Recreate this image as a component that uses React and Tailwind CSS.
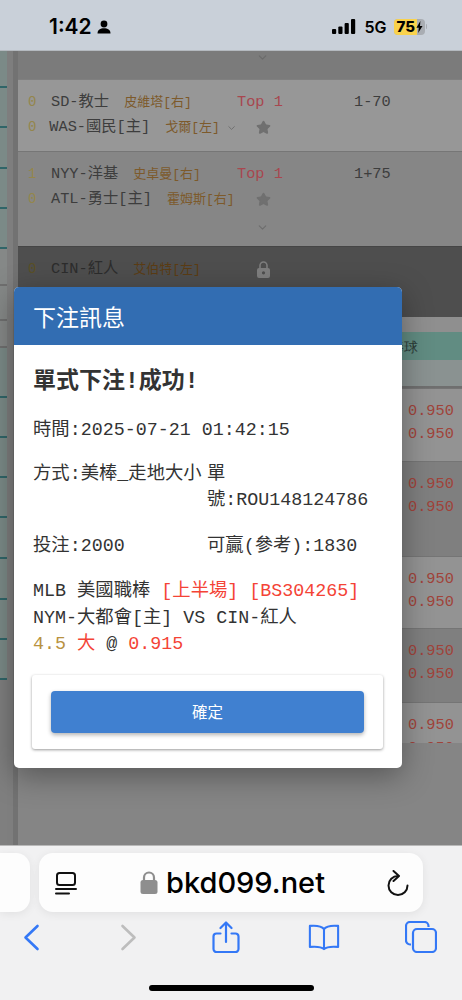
import { ChevronDown, Star } from "lucide-react";

const matches = [
  {
    bg: "bg-[#979797]",
    border: "border-[#7f7f7f]",
    height: "h-[72px]",
    home: { score: "0", team: "SD-教士", pitcher: "皮維塔[右]" },
    away: { score: "0", team: "WAS-國民[主]", pitcher: "戈爾[左]" },
    inlineChevron: true,
    top: "Top 1",
    line: "1-70",
  },
  {
    bg: "bg-[#868686]",
    border: "border-[#767676]",
    height: "h-[95px]",
    home: { score: "1", team: "NYY-洋基", pitcher: "史卓曼[右]" },
    away: { score: "0", team: "ATL-勇士[主]", pitcher: "霍姆斯[右]" },
    chevron: true,
    top: "Top 1",
    line: "1+75",
  },
];

const oddsRows = [
  { y: "h-[73px]", bg: "bg-[#939393]" },
  { y: "h-[95px]", bg: "bg-[#7f7f7f]" },
  { y: "h-[72px]", bg: "bg-[#939393]" },
  { y: "h-[74px]", bg: "bg-[#7f7f7f]" },
  { y: "h-[41px]", bg: "bg-[#939393]" },
];

// teal cells on the far left, the gray ones are the unselected items
const stripCells = [
  "h-[37px] bg-[#7b8a87] border-[#2f6568]",
  "h-[40px] bg-[#7b8a87] border-[#2f6568]",
  "h-[41px] bg-[#7b8a87] border-[#2f6568]",
  "h-[40px] bg-[#7b8a87] border-[#2f6568]",
  "h-[40px] bg-[#7b8a87] border-[#2f6568]",
  "h-[37px] bg-[#858887] border-[#6f6f6f]",
  "h-[35px] bg-[#858887] border-[#6f6f6f]",
  "h-[27px] bg-[#858887] border-[#6f6f6f]",
  "h-[50px] bg-[#7b8a87] border-[#2f6568]",
  "h-[40px] bg-[#7b8a87] border-[#2f6568]",
  "h-[40px] bg-[#7b8a87] border-[#2f6568]",
  "h-[40px] bg-[#7b8a87] border-[#2f6568]",
  "h-[41px] bg-[#7b8a87] border-[#2f6568]",
  "h-[41px] bg-[#7b8a87] border-[#2f6568]",
  "h-[40px] bg-[#7b8a87] border-[#2f6568]",
  "h-[40px] bg-[#7b8a87] border-[#2f6568]",
];

function TeamLine({ score, team, pitcher, dark, children }) {
  return (
    <div className="flex items-center h-[25px] whitespace-nowrap">
      <span className={`w-[33px] pl-[10px] text-[14px] ${dark ? "text-[#5a5026]" : "text-[#94864c]"}`}>{score}</span>
      <span className={`text-[15.3px] ${dark ? "text-[#2c2c2c]" : "text-[#3d3d3d]"}`}>{team}</span>
      <span className={`ml-[15px] text-[13px] ${dark ? "text-[#5b3c14]" : "text-[#7d5a2b]"}`}>{pitcher}</span>
      {children}
    </div>
  );
}

function MatchRow({ match }) {
  return (
    <div className={`${match.height} ${match.bg} border-t ${match.border} pt-[10px] shrink-0`}>
      <div className="grid grid-cols-[219px_117px_1fr]">
        <div>
          <TeamLine {...match.home} />
          <TeamLine {...match.away}>
            {match.inlineChevron && <ChevronDown className="ml-[6px] w-[12px] h-[12px] text-[#6d6d6d]" />}
          </TeamLine>
        </div>
        <div className="w-[48px]">
          <div className="h-[25px] flex items-center text-[15.3px] text-[#a8474f] whitespace-nowrap">{match.top}</div>
          <div className="h-[25px] flex items-center justify-center pl-[4px]">
            <Star className="w-[15px] h-[15px] fill-[#707070] text-[#707070]" />
          </div>
        </div>
        <div className="h-[25px] flex items-center text-[15.3px] text-[#3d3d3d]">{match.line}</div>
      </div>
      {match.chevron && (
        <div className="pl-[238px] mt-[9px]">
          <ChevronDown className="w-[13px] h-[13px] text-[#6d6d6d]" />
        </div>
      )}
    </div>
  );
}

function Background() {
  return (
    <div className="flex h-[794px] overflow-hidden">
      <div className="w-[7px] shrink-0 flex flex-col">
        {stripCells.map((cell, i) => (
          <div key={i} className={`${cell} border-b-2 shrink-0`} />
        ))}
      </div>
      <div className="w-[6px] shrink-0 bg-[#7e7e7e]" />
      <div className="w-[5px] shrink-0 bg-[#727272]" />
      <div className="flex-1 min-w-0 flex flex-col bg-[#868686] [font-family:'Liberation_Mono','Noto_Sans_CJK_TC',monospace]">
        <div className="h-[28px] bg-[#7b7b7b] pl-[238px] shrink-0">
          <ChevronDown className="w-[13px] h-[13px] text-[#6a6a6a]" />
        </div>
        {matches.map((m) => (
          <MatchRow key={m.line} match={m} />
        ))}
        <div className="h-[71px] bg-[#4e4e4e] border-t border-[#454545] pt-[10px] shrink-0">
          <div className="grid grid-cols-[219px_1fr]">
            <TeamLine score="0" team="CIN-紅人" pitcher="艾伯特[左]" dark />
            <div className="w-[48px] h-[25px] flex items-center justify-center pl-[4px]">
              <svg width="13" height="17" viewBox="0 0 13 17" fill="#7e7e7e">
                <path d="M3 8V4.5a3.5 3.5 0 0 1 7 0V8" fill="none" stroke="#7e7e7e" strokeWidth="1.6" />
                <path fillRule="evenodd" d="M2 7h9a2 2 0 0 1 2 2v6a2 2 0 0 1-2 2H2a2 2 0 0 1-2-2V9a2 2 0 0 1 2-2zm4.5 3.2a1.6 1.6 0 1 0 0 3.2 1.6 1.6 0 0 0 0-3.2z" />
              </svg>
            </div>
          </div>
        </div>
        <div className="h-[15px] bg-[#8f8f8f] shrink-0" />
        <div className="h-[28px] bg-[#618c82] shrink-0 flex items-center justify-end pr-[44px] text-[14px] text-[#2c3b38] font-sans">
          棒球
        </div>
        <div className="h-[28px] bg-[#8a9291] border-b-2 border-[#6f6f6f] shrink-0" />
        {oddsRows.map((row, i) => (
          <div key={i} className={`${row.y} ${row.bg} border-t border-[#757575] shrink-0 overflow-hidden pt-[11px] pl-[390px] text-[15.3px] leading-[23px] text-[#a0433a]`}>
            <div>0.950</div>
            <div>0.950</div>
          </div>
        ))}
        <div className="flex-1 bg-[#858585]" />
      </div>
    </div>
  );
}

function BetModal() {
  return (
    <div className="absolute left-[14px] top-[287px] w-[388px] h-[481px] bg-white rounded-[5px] overflow-hidden shadow-[0_8px_30px_rgba(0,0,0,0.35)] [font-family:'Liberation_Mono','Noto_Sans_CJK_TC',monospace] text-[#333333]">
      <div className="h-[58px] bg-[#326db2] flex items-center pl-[19px] text-[23px] text-white [font-family:'Noto_Sans_CJK_TC',sans-serif]">
        下注訊息
      </div>
      <div className="px-[19px]">
        <div className="mt-[20px] text-[23px] leading-[34px] font-semibold text-[#333333]">
          單式下注!成功!
        </div>
        <div className="mt-[19px] text-[18.33px] leading-[26px]">時間:2025-07-21 01:42:15</div>
        <div className="mt-[18px] grid grid-cols-2 text-[18.33px] leading-[26px]">
          <div>方式:美棒_走地大小</div>
          <div className="-ml-[1px]">單號:ROU148124786</div>
        </div>
        <div className="mt-[20px] grid grid-cols-2 text-[18.33px] leading-[26px]">
          <div>投注:2000</div>
          <div className="-ml-[1px]">可贏(參考):1830</div>
        </div>
        <div className="mt-[19px] text-[18.33px] leading-[26.5px]">
          <div>
            MLB 美國職棒 <span className="text-[#f44336]">[上半場] [BS304265]</span>
          </div>
          <div>NYM-大都會[主] VS CIN-紅人</div>
          <div>
            <span className="text-[#b8923f]">4.5</span> <span className="text-[#f44336]">大</span> @ <span className="text-[#f44336]">0.915</span>
          </div>
        </div>
        <div className="mt-[16px] -ml-[1px] h-[74px] rounded-[3px] px-[19px] pt-[16px] shadow-[0_1px_3px_rgba(0,0,0,0.4)]">
          <button className="w-full h-[42px] rounded-[4px] bg-[#4080d0] text-white text-[15.5px] shadow-[0_2px_4px_rgba(0,0,0,0.3)] [font-family:'Noto_Sans_CJK_TC',sans-serif]">
            確定
          </button>
        </div>
      </div>
    </div>
  );
}

function StatusBar() {
  return (
    <div className="h-[51px] bg-[#c9d0d9] border-b border-[#b4b9bf] flex items-center pl-[49px] pr-[35px] pt-[3px] [font-family:Inter,sans-serif] text-black">
      <span className="text-[21px] font-semibold">1:42</span>
      <svg className="ml-[5px]" width="14" height="14" viewBox="0 0 14 14" fill="black">
        <circle cx="7" cy="4" r="3.4" />
        <path d="M0.5 13.5c0-3.6 2.8-5.2 6.5-5.2s6.5 1.6 6.5 5.2z" />
      </svg>
      <div className="ml-auto flex items-center">
        <svg width="24" height="15" viewBox="0 0 24 15" fill="black">
          <rect x="0" y="10" width="4.2" height="5" rx="1" />
          <rect x="6.3" y="7.4" width="4.2" height="7.6" rx="1" />
          <rect x="12.6" y="4" width="4.2" height="11" rx="1" />
          <rect x="19" y="0" width="4.2" height="15" rx="1" />
        </svg>
        <span className="ml-[8px] text-[16px] font-semibold">5G</span>
        <div className="ml-[7px] relative w-[31px] h-[16px] rounded-[4px] bg-[#a9adb3] overflow-hidden">
          <div className="absolute inset-y-0 left-0 w-[23px] bg-[#f9d24c]" />
          <div className="absolute inset-0 flex items-center pl-[3px] text-[15px] leading-none font-extrabold">
            75
            <svg width="7" height="12" viewBox="0 0 7 12" fill="black" className="ml-[1px]">
              <path d="M4.4 0 0.4 6.8h2.4L2.2 12l4.3-7.1H4z" />
            </svg>
          </div>
        </div>
        <div className="ml-[1px] w-[1.5px] h-[5px] rounded-r-sm bg-[#a9adb3]" />
      </div>
    </div>
  );
}

function BrowserBar() {
  return (
    <div className="h-[155px] bg-[#f1f1f2] border-t border-[#b9b9b9] flex flex-col [font-family:Inter,sans-serif]">
      <div className="mt-[7px] flex gap-[9px] h-[59px]">
        <div className="w-[30px] rounded-r-[14px] bg-[#fdfdfd] shadow-[0_2px_10px_rgba(0,0,0,0.07)]" />
        <div className="w-[384px] rounded-[14px] bg-[#fdfdfd] shadow-[0_2px_10px_rgba(0,0,0,0.07)] flex items-center pl-[16px] pr-[14px]">
          <svg width="22" height="24" viewBox="0 0 22 24" fill="none" stroke="#111" strokeWidth="2" strokeLinecap="round">
            <rect x="2" y="2" width="18" height="12" rx="2.5" />
            <path d="M1 18h20M1 22.5h13" />
          </svg>
          <div className="flex-1 flex items-center justify-center pl-[1px]">
            <svg width="18" height="24" viewBox="0 0 18 24" fill="#8e8e8e">
              <path d="M4 10V6.5a5 5 0 0 1 10 0V10" fill="none" stroke="#8e8e8e" strokeWidth="2.2" />
              <rect x="0.5" y="9" width="17" height="14" rx="2.5" />
            </svg>
            <span className="ml-[8px] text-[29px] font-medium text-black leading-none">bkd099.net</span>
          </div>
          <svg width="22" height="26" viewBox="0 0 22 26" fill="none" stroke="#111" strokeWidth="2" strokeLinecap="round" strokeLinejoin="round">
            <path d="M11 6A9.5 9.5 0 1 0 20.5 15.5" />
            <path d="M6.5 1 12 6 6.5 11" />
          </svg>
        </div>
      </div>
      <div className="mt-[3px] flex items-center justify-between pl-[15px] pr-[25px] h-[44px]">
        <div className="w-[32px] flex justify-center">
          <svg width="17" height="27" viewBox="0 0 17 27" fill="none" stroke="#3478f6" strokeWidth="2.6" strokeLinecap="round" strokeLinejoin="round">
            <path d="M14.5 2 2.5 13.5 14.5 25" />
          </svg>
        </div>
        <div className="w-[32px] flex justify-center">
          <svg width="17" height="27" viewBox="0 0 17 27" fill="none" stroke="#bdbdbd" strokeWidth="2.6" strokeLinecap="round" strokeLinejoin="round">
            <path d="M2.5 2 14.5 13.5 2.5 25" />
          </svg>
        </div>
        <div className="w-[32px] flex justify-center">
          <svg width="28" height="33" viewBox="0 0 28 33" fill="none" stroke="#3478f6" strokeWidth="2.2" strokeLinecap="round" strokeLinejoin="round">
            <path d="M8.5 12.5H4.5a3 3 0 0 0-3 3V28a3 3 0 0 0 3 3h19a3 3 0 0 0 3-3V15.5a3 3 0 0 0-3-3h-4" />
            <path d="M14 21V2M8.5 7 14 1.5 19.5 7" />
          </svg>
        </div>
        <div className="w-[32px] flex justify-center">
          <svg width="34" height="28" viewBox="0 0 34 28" fill="none" stroke="#3478f6" strokeWidth="2.2" strokeLinecap="round" strokeLinejoin="round">
            <path d="M17 5.5C14.5 2.5 10 1.5 2 2.2v22.3c8-.7 12.5 0 15 2.3 2.5-2.3 7-3 15-2.3V2.2C24 1.5 19.5 2.5 17 5.5z" />
            <path d="M17 5.5v21" />
          </svg>
        </div>
        <div className="w-[32px] flex justify-center">
          <svg width="32" height="32" viewBox="0 0 32 32" fill="none" stroke="#3478f6" strokeWidth="2.2" strokeLinejoin="round">
            <path d="M6 23.5H5a4 4 0 0 1-4-4V5a4 4 0 0 1 4-4h14.5a4 4 0 0 1 4 4v1" />
            <rect x="8" y="8" width="23" height="23" rx="4" />
          </svg>
        </div>
      </div>
      <div className="mt-auto mb-[9px] ml-[149px] w-[165px] h-[6px] rounded-full bg-black" />
    </div>
  );
}

export default function App() {
  return (
    <div className="w-[462px] h-[1000px] overflow-hidden bg-[#7f7f7f]">
      <StatusBar />
      <Background />
      <BrowserBar />
      <BetModal />
    </div>
  );
}
